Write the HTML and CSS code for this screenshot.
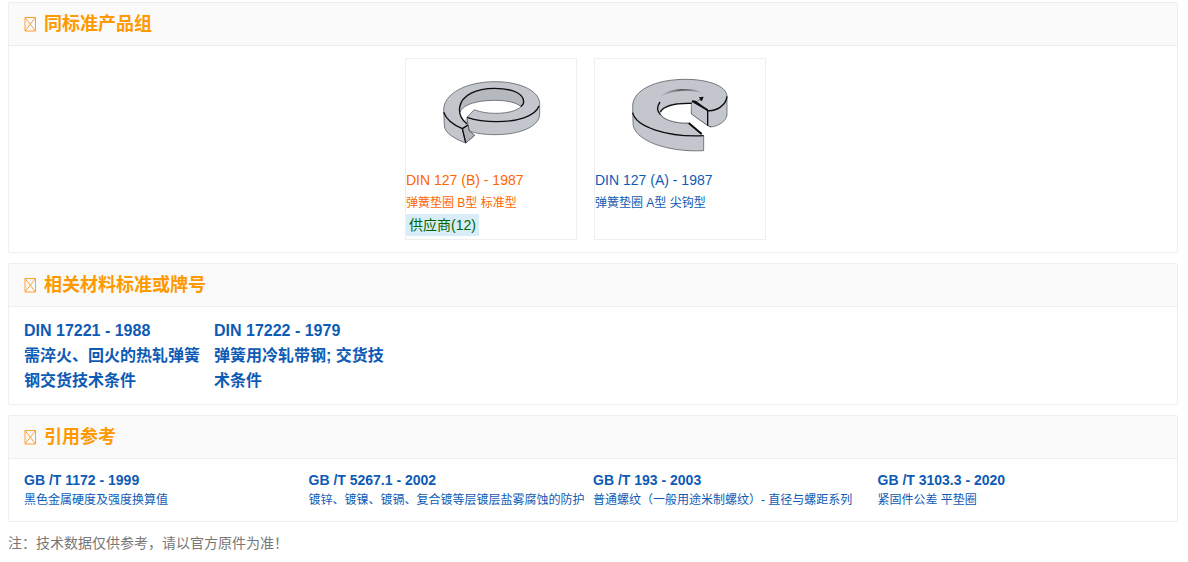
FILE: index.html
```html
<!DOCTYPE html>
<html lang="zh-CN">
<head>
    <meta charset="UTF-8">
    <meta name="viewport" content="width=device-width, initial-scale=1.0">
    <title>DIN 127 (B) - 1987</title>
    <link rel="stylesheet" href="styles.css">
</head>
<body>
    <section class="card">
        <h2 class="card-header">
            <svg class="icon" viewBox="0 0 13 15" aria-hidden="true"><path d="M1 .5h10.500v13.500H1zM1 .5l10.500 13.500M11.500 .5L1 14"/></svg>
            同标准产品组
        </h2>
        <div class="product-list">
            <a class="product active" href="#">
                <svg class="product-img" viewBox="18 27 510 330" aria-hidden="true">
                    <path class="metal" d="M131 180C131 130 200 95 285 95C365 95 418 125 419 160V195C416 230 360 254 285 254C255 254 225 250 208 243L224 256L197 279C165 267 135 250 133 228Z"/>
                    <path class="hole" d="M181 184C190 162 235 151 287 151C322 151 350 158 363 170C352 181 325 190 287 190C264 190 242 187 223 179L201 202L193 214C182 203 177 195 181 184Z"/>
                    <path class="shade" d="M181 186C172 150 215 115 283 115C345 115 380 140 369 165L363 170C350 158 322 151 287 151C235 151 190 162 181 186Z"/>
                    <path class="thin" d="M181 186C190 162 235 151 287 151C322 151 350 158 363 170"/>
                    <path class="edge" d="M201 222C180 205 177 185 179 172C185 135 230 115 283 115C345 115 376 135 370 161L363 170"/>
                    <path class="thin" d="M363 170C350 182 325 190 287 190C264 190 242 187 223 179L201 202"/>
                    <path class="metal dark" d="M187 236L204 225L208 243L224 256L197 279Z"/>
                    <path class="edge" d="M131 187C140 212 160 225 187 236L204 225M187 236L197 278M201 202C225 210 260 215 290 215C350 215 405 200 417 168"/>
                    <path class="thin" d="M201 202L204 225L208 243"/>
                </svg>
                <span class="product-code">DIN 127 (B) - 1987</span>
                <span class="product-name">弹簧垫圈 B型 标准型</span>
                <span class="supplier">供应商(12)</span>
            </a>
            <a class="product" href="#">
                <svg class="product-img" viewBox="15 27 510 330" aria-hidden="true">
                    <defs>
                        <linearGradient id="lip" x1="0" x2="1">
                            <stop offset="0" stop-color="#bfc2c8"/>
                            <stop offset="0.5" stop-color="#55585c"/>
                            <stop offset="1" stop-color="#bfc2c8"/>
                        </linearGradient>
                    </defs>
                    <path class="metal" d="M128 165C132 120 195 88 287 88C355 88 410 108 411 139V195C408 215 385 228 363 231L353 227L304 192V160C285 159 260 160 245 164C222 170 207 180 209 190C217 210 260 221 296 219L341 257V302C230 308 130 270 129 220Z"/>
                    <path class="hole" d="M306 160C255 158 216 168 210 187C215 210 258 222 296 219L340 257L370 240L353 227L304 192Z"/>
                    <path class="lip" d="M208 142C230 120 260 117 285 117C310 117 328 121 340 132C305 118 250 118 208 142Z" fill="url(#lip)"/>
                    <path class="edge" d="M211 194C198 180 203 166 210 156M211 187C221 166 260 159 306 160M308 153L318 155L353 182C380 184 408 166 411 139M353 182V227M128 188C137 230 230 262 341 257"/>
                    <path class="edge thick" d="M296 219L335 252M306 153L353 180"/>
                    <path class="thin" d="M304 157V192L353 227L363 231M210 190C217 210 260 221 296 219"/>
                    <path d="M326 142L341 140L336 153L329 150L317 156L331 147Z" fill="#111"/>
                </svg>
                <span class="product-code">DIN 127 (A) - 1987</span>
                <span class="product-name">弹簧垫圈 A型 尖钩型</span>
            </a>
        </div>
    </section>

    <section class="card">
        <h2 class="card-header">
            <svg class="icon" viewBox="0 0 13 15" aria-hidden="true"><path d="M1 .5h10.500v13.500H1zM1 .5l10.500 13.500M11.500 .5L1 14"/></svg>
            相关材料标准或牌号
        </h2>
        <div class="material-list">
            <a class="material" href="#">DIN 17221 - 1988<br>需淬火、回火的热轧弹簧钢交货技术条件</a>
            <a class="material" href="#">DIN 17222 - 1979<br>弹簧用冷轧带钢; 交货技术条件</a>
        </div>
    </section>

    <section class="card">
        <h2 class="card-header">
            <svg class="icon" viewBox="0 0 13 15" aria-hidden="true"><path d="M1 .5h10.500v13.500H1zM1 .5l10.500 13.500M11.500 .5L1 14"/></svg>
            引用参考
        </h2>
        <div class="reference-list">
            <a class="reference" href="#"><strong>GB /T 1172 - 1999</strong><span>黑色金属硬度及强度换算值</span></a>
            <a class="reference" href="#"><strong>GB /T 5267.1 - 2002</strong><span>镀锌、镀镍、镀镉、复合镀等层镀层盐雾腐蚀的防护</span></a>
            <a class="reference" href="#"><strong>GB /T 193 - 2003</strong><span>普通螺纹（一般用途米制螺纹）- 直径与螺距系列</span></a>
            <a class="reference" href="#"><strong>GB /T 3103.3 - 2020</strong><span>紧固件公差 平垫圈</span></a>
        </div>
    </section>

    <p class="note">注：技术数据仅供参考，请以官方原件为准！</p>
</body>
</html>
```
FILE: styles.css
```css
* {
    box-sizing: border-box;
}

body {
    margin: 0;
    padding: 2px 10px 8px 8px;
    background: #fff;
    color: #777;
    font-family: "Liberation Sans", Arial, "Noto Sans CJK SC", sans-serif;
    font-size: 14px;
    line-height: 22px;
}

a {
    color: #0e5bb5;
    text-decoration: none;
}

.card {
    margin-bottom: 10px;
    border: 1px solid #eee;
    border-radius: 2px;
}

.card-header {
    display: flex;
    align-items: center;
    gap: 7px;
    height: 43px;
    margin: 0;
    padding: 0 15px;
    background: #fafafa;
    border-bottom: 1px solid #eee;
    color: #ff9900;
    font-size: 18px;
    font-weight: bold;
}

.icon {
    width: 13px;
    height: 15px;
    fill: none;
    stroke: #ffa033;
    stroke-width: 1;
}

/* products */
.product-list {
    display: flex;
    justify-content: center;
    gap: 17px;
    padding: 12px 30px 12px 15px;
}

.product {
    display: flex;
    flex-direction: column;
    align-items: flex-start;
    width: 172px;
    min-height: 182px;
    border: 1px solid #eee;
}

.product.active {
    color: #ff6600;
}

.product-img {
    width: 170px;
    height: 110px;
}

.product-code {
    line-height: 23px;
}

.product-name {
    font-size: 12px;
}

.supplier {
    padding: 0 3px;
    background: #d9edf9;
    color: #006600;
}

.metal {
    fill: #c3c6cc;
    stroke: #44474c;
    stroke-width: 2;
}

.dark {
    fill: #b0b3b9;
}

.shade {
    fill: #b5b8be;
}

.hole {
    fill: #fff;
}

.edge {
    fill: none;
    stroke: #0c0c0e;
    stroke-width: 4;
}

.thick {
    stroke-width: 6;
}

.thin {
    fill: none;
    stroke: #44474c;
    stroke-width: 2;
}

/* materials */
.material-list {
    display: flex;
    gap: 10px;
    padding: 11px 15px;
}

.material {
    width: 180px;
    font-size: 16px;
    font-weight: bold;
    line-height: 25px;
}

/* references */
.reference-list {
    display: grid;
    grid-template-columns: repeat(4, 1fr);
    padding: 10px 15px 12px;
}

.reference {
    display: flex;
    flex-direction: column;
    white-space: nowrap;
}

.reference span {
    font-size: 12px;
    line-height: 18px;
}

.note {
    margin: 0;
}
```
